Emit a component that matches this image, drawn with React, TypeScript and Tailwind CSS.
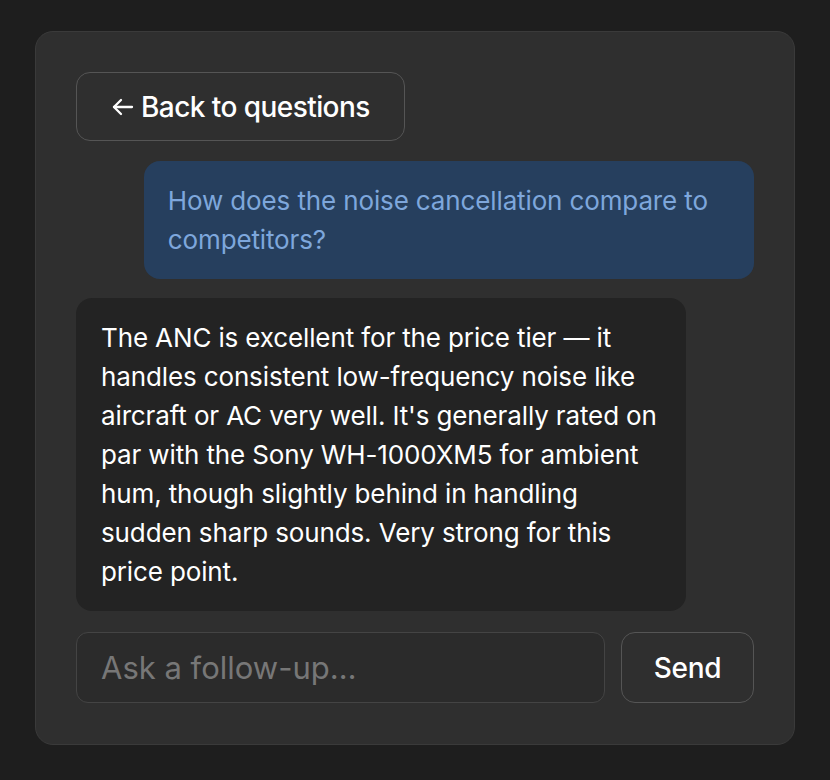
import React from 'react';

const App = () => {
  return (
    <div
      className="min-h-screen w-full bg-[#1e1e1e] px-[35px] pt-[31px]"
      style={{ fontFamily: 'Inter, "Noto Sans", sans-serif' }}
    >
      <div className="w-[760px] rounded-[18px] border border-[#3a3a3a] bg-[#2f2f2f] px-[40px] pt-[40px] pb-[41px]">
        <button className="flex h-[69px] items-center gap-[6px] rounded-[14px] border border-[#555] pl-[34px] pr-[34px] text-[28px] font-medium tracking-[-0.02em] text-white">
          <svg width="24" height="24" viewBox="0 0 24 24" fill="none" stroke="currentColor" strokeWidth="2.3" strokeLinecap="round" strokeLinejoin="round">
            <path d="M21 12H3" />
            <path d="M10 5l-7 7 7 7" />
          </svg>
          Back to questions
        </button>

        <div className="mt-[20px] flex justify-end">
          <div className="w-[90%] rounded-[16px] bg-[#263f5e] px-[24px] py-[20px] text-[26px] leading-[39px] tracking-[-0.005em] text-[#7ea7dc]">
            How does the noise cancellation compare to competitors?
          </div>
        </div>

        <div className="mt-[19px] flex justify-start">
          <div className="w-[90%] rounded-[16px] bg-[#232323] px-[25px] py-[20px] text-[26px] leading-[39px] tracking-[-0.005em] text-white">
            The ANC is excellent for the price tier — it handles consistent low-frequency noise like aircraft or AC very well. It's generally rated on par with the Sony WH-1000XM5 for ambient hum, though slightly behind in handling sudden sharp sounds. Very strong for this price point.
          </div>
        </div>

        <div className="mt-[21px] flex gap-[16px]">
          <input
            placeholder="Ask a follow-up…"
            className="h-[71px] min-w-0 flex-1 rounded-[12px] border border-[#444] bg-[#2b2b2b] px-[24px] text-[31px] text-white placeholder-[#777] outline-none"
          />
          <button className="h-[71px] w-[133px] rounded-[14px] border border-[#555] text-[28px] font-medium tracking-[-0.01em] text-white">
            Send
          </button>
        </div>
      </div>
    </div>
  );
};

export default App;
